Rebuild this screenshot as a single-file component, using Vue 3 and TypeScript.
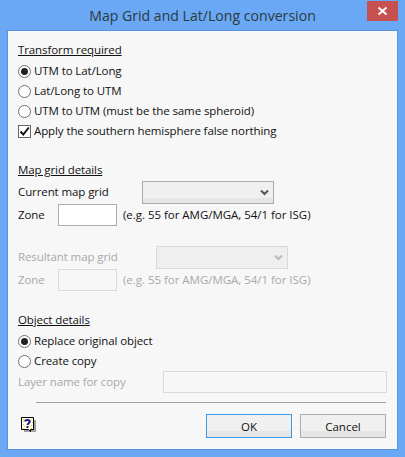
<template>
  <div class="window">
    <header class="titlebar">
      <span class="title">Map Grid and Lat/Long conversion</span>
      <button class="close" type="button" aria-label="Close">
        <svg width="11" height="10" viewBox="0 0 11 10">
          <path d="M1.5 1.5 9.5 8.5M9.5 1.5 1.5 8.5" stroke="#fff" stroke-width="2" fill="none" />
        </svg>
      </button>
    </header>

    <main class="client">
      <section class="group first">
        <h2 class="heading">Transform required</h2>
        <label v-for="option in transformOptions" :key="option" class="row choice">
          <span class="radio" :class="{ checked: option === transform }"></span>
          {{ option }}
        </label>
        <label class="row choice">
          <span class="check">
            <svg width="11" height="11" viewBox="0 0 11 11">
              <path d="M1.5 5.5 4.3 8.5 9.8 1.5" stroke="#111" stroke-width="2" fill="none" />
            </svg>
          </span>
          Apply the southern hemisphere false northing
        </label>
      </section>

      <section class="group details">
        <h2 class="heading">Map grid details</h2>
        <div class="field-row grid-row">
          <span class="label current">Current map grid</span>
          <span class="select"><svg class="chevron" width="9" height="7" viewBox="0 0 9 7"><path d="M1 1.5 4.5 5 8 1.5" stroke="#555" stroke-width="2" fill="none" /></svg></span>
        </div>
        <div class="field-row zone-row">
          <span class="label zone">Zone</span>
          <span class="input zone-input"></span>
          <span class="hint">(e.g. 55 for AMG/MGA, 54/1 for ISG)</span>
        </div>
      </section>

      <section class="group resultant disabled">
        <div class="field-row grid-row">
          <span class="label result">Resultant map grid</span>
          <span class="select"><svg class="chevron" width="9" height="7" viewBox="0 0 9 7"><path d="M1 1.5 4.5 5 8 1.5" stroke="#bbb" stroke-width="2" fill="none" /></svg></span>
        </div>
        <div class="field-row zone-row">
          <span class="label zone">Zone</span>
          <span class="input zone-input"></span>
          <span class="hint">(e.g. 55 for AMG/MGA, 54/1 for ISG)</span>
        </div>
      </section>

      <section class="group object">
        <h2 class="heading">Object details</h2>
        <label v-for="option in objectOptions" :key="option" class="row choice">
          <span class="radio" :class="{ checked: option === objectMode }"></span>
          {{ option }}
        </label>
        <div class="field-row layer-row disabled">
          <span class="label layer">Layer name for copy</span>
          <span class="input layer-input"></span>
        </div>
      </section>

      <hr class="separator" />

      <footer class="footer">
        <svg class="help" width="16" height="18" viewBox="0 0 16 18">
          <path d="M2 2h12v12H2z" fill="#000" opacity=".35" transform="translate(1 1)" />
          <path d="M.5.5h12v12h-3v2l-2-2h-7z" fill="#fffef0" stroke="#000" />
          <path d="M2 2h1v1H2zM4 2h1v1H4zM10 2h1v1h-1zM2 4h1v1H2zM11 5h1v1h-1zM2 7h1v1H2zM3 9h1v1H3zM10 8h1v1h-1zM2 11h1v1H2zM5 10h1v1H5zM10 11h1v1h-1z" fill="#e8d800" />
          <path d="M4.2 4.6C4.2 2.4 8.8 2.4 8.8 4.6 8.8 6.2 6.5 6.2 6.5 8" stroke="#1a1a8c" stroke-width="2" fill="none" />
          <path d="M5.5 9h2v2h-2z" fill="#1a1a8c" />
        </svg>
        <div class="actions">
          <button class="btn default" type="button">OK</button>
          <button class="btn" type="button">Cancel</button>
        </div>
      </footer>
    </main>
  </div>
</template>

<script setup lang="ts">
const transformOptions = ['UTM to Lat/Long', 'Lat/Long to UTM', 'UTM to UTM (must be the same spheroid)']
const transform = 'UTM to Lat/Long'
const objectOptions = ['Replace original object', 'Create copy']
const objectMode = 'Replace original object'
</script>

<style>
html,
body {
  margin: 0;
  background: #6aa8f5;
}
</style>

<style scoped>
.window {
  width: 405px;
  height: 457px;
  box-sizing: border-box;
  padding: 0 7px 7px;
  display: flex;
  flex-direction: column;
  background: #6aa8f5;
  font-family: "Open Sans", "Noto Sans", sans-serif;
  font-size: 11.5px;
  letter-spacing: -0.1px;
  color: #111;
}

.titlebar {
  height: 30px;
  flex: none;
  position: relative;
  display: flex;
  justify-content: center;
  align-items: center;
}

.title {
  font-size: 14.1px;
  letter-spacing: 0;
  color: #2b3a3a;
}

.close {
  position: absolute;
  top: 1px;
  right: 0;
  width: 31px;
  height: 20px;
  padding: 0;
  border: 0;
  background: #c75050;
  display: flex;
  align-items: center;
  justify-content: center;
}

.client {
  flex: 1;
  display: flex;
  flex-direction: column;
  border: 1px solid #5a96e0;
  background: #f7f7f7;
  padding: 9px 10px 0 10px;
}

.group {
  display: flex;
  flex-direction: column;
}

.heading {
  height: 20px;
  line-height: 20px;
  margin: 0 0 1px;
  font-size: inherit;
  font-weight: 400;
  text-decoration: underline;
}

.row {
  height: 20px;
  box-sizing: border-box;
  padding-bottom: 2px;
  display: flex;
  align-items: center;
  gap: 3px;
}

.radio {
  width: 13px;
  height: 13px;
  margin-top: 2px;
  box-sizing: border-box;
  flex: none;
  border: 1px solid #707070;
  border-radius: 50%;
  background: #fff;
  position: relative;
}

.radio.checked::after {
  content: "";
  position: absolute;
  left: 2px;
  top: 2px;
  width: 7px;
  height: 7px;
  border-radius: 50%;
  background: #222;
}

.check {
  width: 13px;
  height: 13px;
  margin-top: 2px;
  box-sizing: border-box;
  flex: none;
  border: 1px solid #666;
  background: #fff;
  display: flex;
}

.details,
.object {
  margin-top: 19px;
}

.resultant {
  margin-top: 20px;
}

.field-row {
  display: flex;
  align-items: center;
}

.grid-row {
  height: 23px;
}

.zone-row {
  height: 22px;
}

.layer-row {
  height: 22px;
}

.label.current {
  width: 124px;
}

.label.result {
  width: 138px;
}

.label.zone {
  width: 40px;
}

.label.layer {
  width: 145px;
}

.label,
.hint {
  padding-bottom: 2px;
}

.select {
  width: 132px;
  height: 23px;
  box-sizing: border-box;
  border: 1px solid #acacac;
  background: linear-gradient(#f0f0f0 0 75%, #e6e6e6 75%);
  display: flex;
  align-items: center;
  justify-content: flex-end;
  padding-right: 4px;
}

.input {
  display: block;
  height: 22px;
  box-sizing: border-box;
  border: 1px solid #abadb3;
  background: #fff;
}

.zone-input {
  width: 59px;
}

.hint {
  margin-left: 6px;
  letter-spacing: -0.03px;
}

.layer-input {
  width: 224px;
}

.disabled {
  color: #a8a8a8;
}

.disabled .select {
  border-color: #d9d9d9;
  background: #efefef;
}

.disabled .input {
  border-color: #d9d9d9;
  background: #f7f7f7;
}

.separator {
  height: 1px;
  margin: 9px 1px 0 18px;
  border: 0;
  background: #a0a0a0;
}

.footer {
  margin-top: 11px;
  margin-right: 1px;
  display: flex;
  align-items: center;
  justify-content: space-between;
}

.help {
  margin-left: 3px;
}

.actions {
  display: flex;
  gap: 8px;
}

.btn {
  width: 86px;
  height: 24px;
  padding: 0;
  border: 1px solid #acacac;
  background: linear-gradient(#f0f0f0 0 75%, #e5e5e5 75%);
  font: inherit;
  color: #111;
}

.btn.default {
  border-color: #3c9be8;
}
</style>
